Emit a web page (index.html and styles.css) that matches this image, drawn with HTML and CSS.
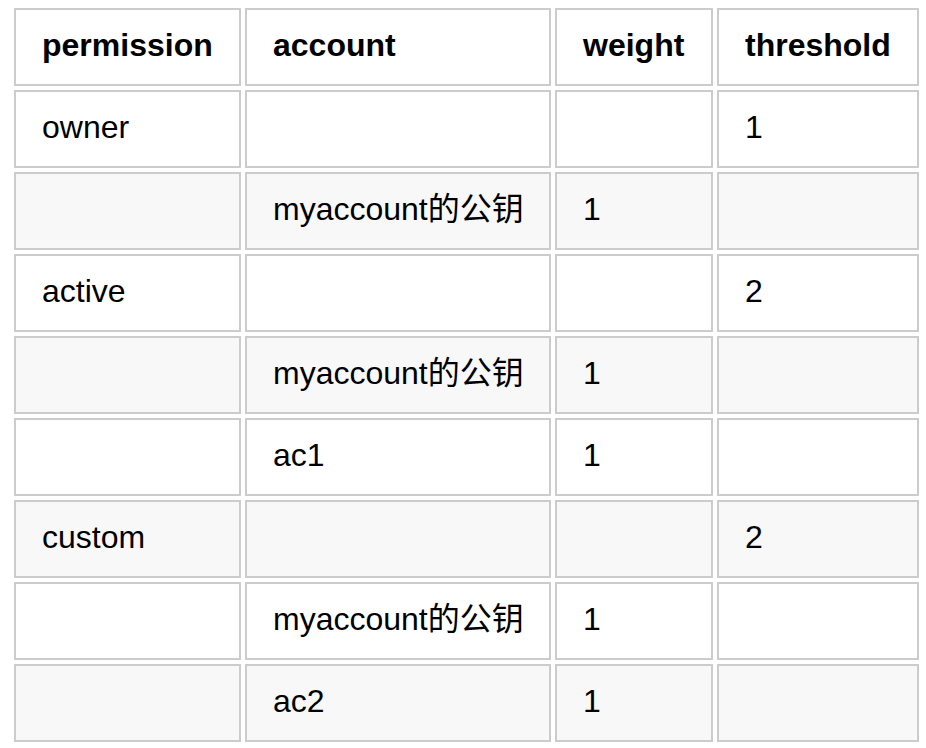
FILE: index.html
```html
<!DOCTYPE html>
<html>
<head>
<meta charset="utf-8">
<link rel="stylesheet" href="styles.css">
</head>
<body>
<table class="perm">
  <colgroup>
    <col class="c1"><col class="c2"><col class="c3"><col class="c4">
  </colgroup>
  <thead>
    <tr><th>permission</th><th>account</th><th>weight</th><th>threshold</th></tr>
  </thead>
  <tbody>
    <tr><td>owner</td><td></td><td></td><td>1</td></tr>
    <tr><td></td><td>myaccount的公钥</td><td>1</td><td></td></tr>
    <tr><td>active</td><td></td><td></td><td>2</td></tr>
    <tr><td></td><td>myaccount的公钥</td><td>1</td><td></td></tr>
    <tr><td></td><td>ac1</td><td>1</td><td></td></tr>
    <tr><td>custom</td><td></td><td></td><td>2</td></tr>
    <tr><td></td><td>myaccount的公钥</td><td>1</td><td></td></tr>
    <tr><td></td><td>ac2</td><td>1</td><td></td></tr>
  </tbody>
</table>
</body>
</html>
```

FILE: styles.css
```css
html, body {
  margin: 0;
  padding: 0;
  background: #fff;
}
body {
  padding: 4px 0 0 10px;
  font-family: "Liberation Sans", Arial, "Noto Sans CJK SC", sans-serif;
  font-size: 32px;
  color: #000;
}
.perm {
  border-collapse: separate;
  border-spacing: 4px;
  table-layout: fixed;
  width: 913px;
}
.c1 { width: 227px; }
.c2 { width: 306px; }
.c3 { width: 158px; }
.c4 { width: 202px; }
.perm th,
.perm td {
  box-sizing: border-box;
  border: 2px solid #cccccc;
  padding: 10px 26px 14px;
  height: 78px;
  line-height: 50px;
  text-align: left;
  white-space: nowrap;
  vertical-align: middle;
}
.perm th {
  font-weight: bold;
}
.perm tbody tr:nth-child(2n) td {
  background: #f8f8f8;
}
```
